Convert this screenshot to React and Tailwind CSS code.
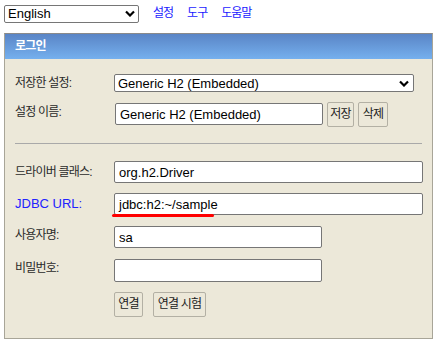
export default function App() {
  const font = { fontFamily: '"Liberation Sans", "Noto Sans CJK KR", sans-serif' };
  const label = "w-[99px] text-[12px] leading-[14px] tracking-[-0.8px] text-[#2a2a2a]";
  const input = "bg-white border border-[#767676] rounded-[2px] flex items-center pl-[4px] text-black";
  const btn = "h-[25px] border border-[#b3b0a4] rounded-[2px] text-[12px] tracking-[-0.8px] whitespace-nowrap text-[#222]";
  return (
    <div className="w-[438px] h-[339px] bg-white text-[13px] leading-[15px] text-[#333] overflow-hidden" style={font}>
      <div className="flex items-center h-[33px] pl-[4px] pb-[9px] pt-[3px]">
        <div className="w-[135px] h-[18px] border border-[#767676] rounded-[2px] flex items-center justify-between pl-[3px] pr-[3px] text-black">
          <span>English</span>
          <svg width="10" height="7" viewBox="0 0 10 7"><path d="M1 1.5 L5 5.5 L9 1.5" stroke="#000" strokeWidth="2.2" fill="none" /></svg>
        </div>
        <a className="ml-[14px] text-[12px] tracking-[-1px] text-[#1a1aff]">설정</a>
        <a className="ml-[14px] text-[12px] tracking-[-1px] text-[#1a1aff]">도구</a>
        <a className="ml-[14px] text-[12px] tracking-[-1px] text-[#1a1aff]">도움말</a>
      </div>
      <div className="ml-[4px] w-[429px] h-[306px] border border-[#a8a598] border-t-[#8a8a8a] bg-[#ece8d9]">
        <div className="h-[25px] bg-gradient-to-b from-[#5a85c6] to-[#75b0ee] text-white font-bold text-[12px] tracking-[-0.8px] flex items-center pl-[10px]">로그인</div>
        <div className="pl-[10px] pt-[15px]">
          <div className="flex items-start h-[18px]">
            <div className={label + " pt-[2px]"}>저장한 설정:</div>
            <div className="w-[300px] h-[18px] bg-white border border-[#767676] rounded-[2px] flex items-center justify-between pl-[3px] pr-[4px] text-black">
              <span>Generic H2 (Embedded)</span>
              <svg width="10" height="7" viewBox="0 0 10 7"><path d="M1 1.5 L5 5.5 L9 1.5" stroke="#000" strokeWidth="2.2" fill="none" /></svg>
            </div>
          </div>
          <div className="flex items-start mt-[11px]">
            <div className={label + " pt-[2px] w-[100px]"}>설정 이름:</div>
            <div className={input + " w-[208px] h-[22px] pl-[3px]"}>Generic H2 (Embedded)</div>
            <button className={btn + " ml-[4px] w-[27px] -mt-[1px]"}>저장</button>
            <button className={btn + " ml-[4px] w-[30px] -mt-[1px]"}>삭제</button>
          </div>
          <div className="mt-[16px] w-[407px] border-t border-[#a9a9a9] h-[18px]" />
          <div className="flex items-start">
            <div className={label + " pt-[4px]"}>드라이버 클래스:</div>
            <div className={input + " w-[309px] h-[22px]"}>org.h2.Driver</div>
          </div>
          <div className="flex items-start mt-[10px]">
            <div className="w-[99px] pt-[3px] text-[#2222ff]">JDBC URL:</div>
            <div className={input + " relative w-[309px] h-[22px]"}>
              jdbc:h2:~/sample
              <div className="absolute left-[-3px] top-[20px] w-[102px] h-[3px] rounded-full bg-[#ff0000]" />
            </div>
          </div>
          <div className="flex items-start mt-[11px]">
            <div className={label + " pt-[2px]"}>사용자명:</div>
            <div className={input + " w-[208px] h-[22px]"}>sa</div>
          </div>
          <div className="flex items-start mt-[11px]">
            <div className={label + " pt-[2px]"}>비밀번호:</div>
            <div className={input + " w-[208px] h-[23px]"} />
          </div>
          <div className="flex items-start mt-[10px] pl-[99px]">
            <button className={btn + " w-[29px]"}>연결</button>
            <button className={btn + " ml-[10px] w-[53px]"}>연결 시험</button>
          </div>
        </div>
      </div>
    </div>
  );
}
